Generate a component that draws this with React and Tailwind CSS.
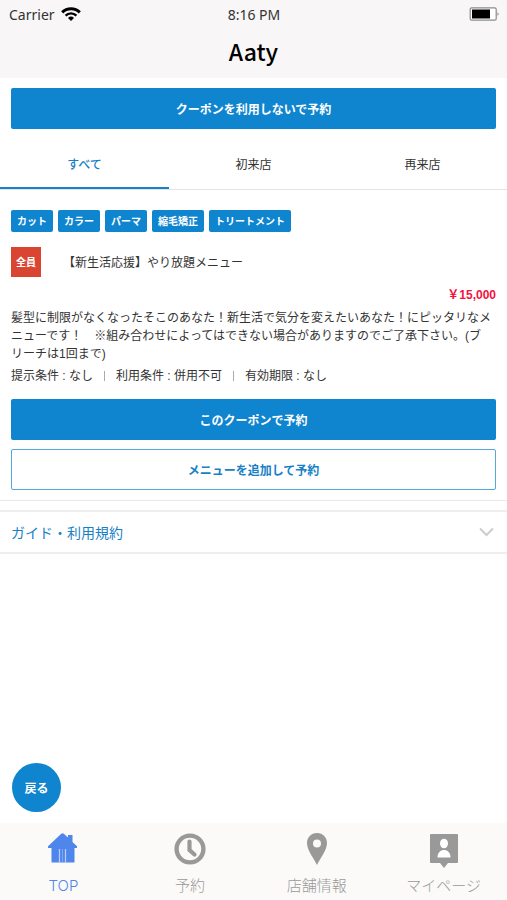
import { useState } from "react";

const tabs = ["すべて", "初来店", "再来店"];
const tags = ["カット", "カラー", "パーマ", "縮毛矯正", "トリートメント"];

const WifiIcon = () => (
  <svg width="20" height="14" viewBox="0 0 20 14" fill="none" aria-hidden="true">
    <path d="M1.2 5.4a12.4 12.4 0 0 1 17.6 0" stroke="#000" strokeWidth="3" />
    <path d="M4.6 8.6a7.6 7.6 0 0 1 10.8 0" stroke="#000" strokeWidth="2.4" />
    <path d="M10 14 7 11a4.4 4.4 0 0 1 6 0z" fill="#000" />
  </svg>
);

const BatteryIcon = () => (
  <svg width="30" height="14" viewBox="0 0 30 14" aria-hidden="true">
    <rect x="1.2" y="0.8" width="26" height="12.4" rx="1.5" fill="#fff" stroke="#8a8a8a" strokeWidth="1.2" />
    <rect x="3" y="2.5" width="18" height="9" fill="#000" />
    <path d="M28.5 5.2a2 2 0 0 1 0 3.6z" fill="#8a8a8a" />
  </svg>
);

const HomeIcon = () => (
  <svg width="32" height="32" viewBox="0 0 32 32" aria-hidden="true">
    <path
      d="M14.5 0.6h2L21 4.6V2h4.5v7l4.5 4.2V15h-2.5v14.5h-23V15H1v-1.8z"
      fill="currentColor"
    />
    <path d="M12.5 16v13.5M18.5 16v13.5" stroke="#b9cff8" strokeWidth="1.2" />
    <path d="M15.5 16v13.5" stroke="#7fa6f2" strokeWidth="1" />
  </svg>
);

const ClockIcon = () => (
  <svg width="32" height="32" viewBox="0 0 32 32" fill="none" stroke="currentColor" aria-hidden="true">
    <circle cx="16" cy="16" r="13.4" strokeWidth="4.4" />
    <path d="M15.5 8.5V17l5 4.5" strokeWidth="4.2" strokeLinecap="round" />
  </svg>
);

const PinIcon = () => (
  <svg width="32" height="32" viewBox="0 0 32 32" fill="currentColor" fillRule="evenodd" aria-hidden="true">
    <path d="M16 0C10 0 6 4.5 6 10c0 7 6.5 15 10 22 3.5-7 10-15 10-22 0-5.5-4-10-10-10zm0 6.5a4 4 0 1 1 0 8 4 4 0 0 1 0-8z" />
  </svg>
);

const UserIcon = () => (
  <svg width="30" height="36" viewBox="0 0 30 36" aria-hidden="true">
    <path
      d="M2 1h26a1 1 0 0 1 1 1v27a1 1 0 0 1-1 1h-9l-4 5-4-5H2a1 1 0 0 1-1-1V2a1 1 0 0 1 1-1z"
      fill="currentColor"
    />
    <ellipse cx="15" cy="10.5" rx="4" ry="4.8" fill="#fff" />
    <path d="M8.5 24.5c0-5 3-7.5 6.5-7.5s6.5 2.5 6.5 7.5z" fill="#fff" />
  </svg>
);

const navItems = [
  { label: "TOP", Icon: HomeIcon },
  { label: "予約", Icon: ClockIcon },
  { label: "店舗情報", Icon: PinIcon },
  { label: "マイページ", Icon: UserIcon },
];

const Header = () => (
  <header className="bg-[#f8f6f7] h-[78px]">
    <div className="grid grid-cols-3 items-center h-7 pl-[9px] pr-2 text-[14px] text-[#333] font-['Noto_Sans',sans-serif]">
      <div className="flex items-center gap-1.5">
        <span>Carrier</span>
        <WifiIcon />
      </div>
      <span className="text-center">8:16 PM</span>
      <div className="flex justify-end">
        <BatteryIcon />
      </div>
    </div>
    <h1 className="text-center text-[23px] leading-[46px] font-medium text-black">Aaty</h1>
  </header>
);

const Coupon = () => (
  <article className="px-[11px] pt-5 pb-[10px] border-b border-[#e8e8e8] text-[#333]">
    <ul className="flex flex-wrap gap-[5px]">
      {tags.map((tag) => (
        <li
          key={tag}
          className="h-[22px] px-1.5 rounded-xs bg-[#0f84cf] text-white text-[10px] leading-[22px] font-bold"
        >
          {tag}
        </li>
      ))}
    </ul>

    <div className="flex items-center gap-[22px] mt-[15px]">
      <span className="size-[30px] bg-[#da4532] text-white text-center text-[10px] leading-[30px] font-bold">
        全員
      </span>
      <h2 className="text-[12px]">【新生活応援】やり放題メニュー</h2>
    </div>

    <div className="font-['Liberation_Sans','Noto_Sans_CJK_JP',sans-serif]">
      <p className="mt-2 text-right text-[12px] leading-5 font-bold text-[#f5113f]">
        ￥15,000
      </p>

      <p className="mt-1 text-[12px] leading-[18px]">
        髪型に制限がなくなったそこのあなた！新生活で気分を変えたいあなた！にピッタリなメ
        <br />
        ニューです！　※組み合わせによってはできない場合がありますのでご了承下さい。(ブ
        <br />
        リーチは1回まで)
      </p>

      <ul className="flex mt-1 text-[12px] leading-[18px]">
        <li>提示条件 : なし</li>
        <li className="flex items-center before:mx-[11px] before:h-[10px] before:w-px before:bg-[#aaa]">
          利用条件 : 併用不可
        </li>
        <li className="flex items-center before:mx-[11px] before:h-[10px] before:w-px before:bg-[#aaa]">
          有効期限 : なし
        </li>
      </ul>
    </div>

    <button
      type="button"
      className="block w-full h-[41px] mt-[14px] rounded-xs bg-[#0f84cf] text-white text-[12px] font-bold"
    >
      このクーポンで予約
    </button>
    <button
      type="button"
      className="block w-full h-[41px] mt-[9px] rounded-xs border border-[#56a7db] text-[#1781c6] text-[12px] font-bold"
    >
      メニューを追加して予約
    </button>
  </article>
);

const App = () => {
  const [activeTab, setActiveTab] = useState("すべて");
  const [activeNav, setActiveNav] = useState("TOP");

  return (
    <div className="flex flex-col min-h-screen bg-white font-['Noto_Sans_CJK_JP',sans-serif]">
      <Header />

      <main className="flex flex-col flex-1">
        <div className="px-[11px] pt-[10px]">
          <button
            type="button"
            className="block w-full h-[41px] rounded-xs bg-[#0f84cf] text-white text-[12px] font-bold"
          >
            クーポンを利用しないで予約
          </button>
        </div>

        <div className="grid grid-cols-3 mt-2 border-b border-[#e4e4e4]" role="tablist">
          {tabs.map((tab) => (
            <button
              key={tab}
              type="button"
              role="tab"
              aria-selected={activeTab === tab}
              onClick={() => setActiveTab(tab)}
              className={`h-[52px] pt-1 border-b-2 text-[12px] ${
                activeTab === tab
                  ? "border-[#1781c6] text-[#1781c6] font-medium"
                  : "border-transparent text-[#333]"
              }`}
            >
              {tab}
            </button>
          ))}
        </div>

        <Coupon />

        <button
          type="button"
          className="flex items-center justify-between w-full h-11 mt-[9px] px-[11px] border-y-2 border-[#eee] text-[14px] text-[#1781c6]"
        >
          ガイド・利用規約
          <svg width="18" height="10" viewBox="0 0 18 10" fill="none" aria-hidden="true">
            <path d="m2 1.5 6.5 6.5L15 1.5" stroke="#ccc" strokeWidth="2" />
          </svg>
        </button>

        <div className="mt-auto px-3 pb-[11px]">
          <button
            type="button"
            className="size-[49px] rounded-full bg-[#0f84cf] text-white text-[12px] font-bold"
          >
            戻る
          </button>
        </div>
      </main>

      <nav className="grid grid-cols-4 h-[77px] bg-[#fbfaf8] font-['Inter','Noto_Sans_CJK_JP',sans-serif]">
        {navItems.map(({ label, Icon }) => (
          <button
            key={label}
            type="button"
            onClick={() => setActiveNav(label)}
            className={`flex flex-col items-center pt-[10px] ${
              activeNav === label ? "text-[#4f86ec]" : "text-[#999]"
            }`}
          >
            <span className="flex items-start h-[42px]">
              <Icon />
            </span>
            <span className="text-[15px] leading-[22px] font-light">{label}</span>
          </button>
        ))}
      </nav>
    </div>
  );
};

export default App;
